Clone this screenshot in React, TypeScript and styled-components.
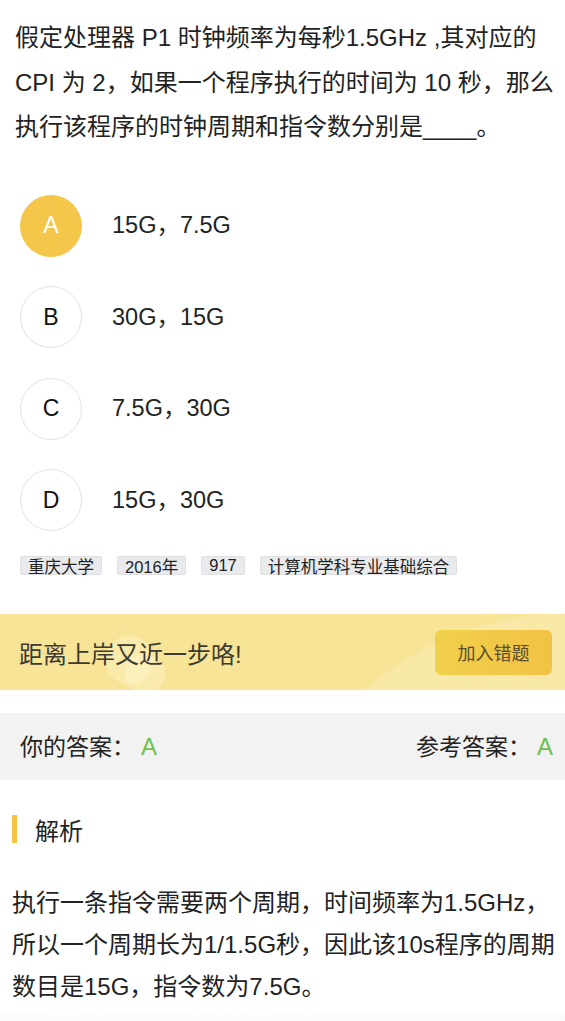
import { createGlobalStyle } from "styled-components";
import styled from "styled-components";

const GlobalStyle = createGlobalStyle`
  html, body {
    margin: 0;
    padding: 0;
    background: #fff;
  }
  body {
    font-family: "Liberation Sans", "Noto Sans CJK SC", sans-serif;
    color: #222;
  }
`;

const Page = styled.div`
  width: 565px;
  overflow: hidden;
`;

// question stem
const Question = styled.p`
  margin: 0;
  padding: 16px 10px 0 15px;
  font-size: 24px;
  line-height: 44.5px;
  color: #222;
`;

const Options = styled.ul`
  list-style: none;
  margin: 0;
  padding: 45px 0 0 20px;
  display: flex;
  flex-direction: column;
  gap: 29.5px;
`;

const Option = styled.li`
  display: flex;
  align-items: center;
  gap: 30px;
  height: 62px;
`;

const Circle = styled.span<{ $active?: boolean }>`
  box-sizing: border-box;
  width: 62px;
  height: 62px;
  border-radius: 50%;
  display: flex;
  align-items: center;
  justify-content: center;
  font-size: 23px;
  color: ${(p) => (p.$active ? "#fff" : "#111")};
  background: ${(p) => (p.$active ? "#f4c64a" : "#fff")};
  border: 1px solid ${(p) => (p.$active ? "#f4c64a" : "#e2e2e2")};
`;

const OptionText = styled.span`
  padding-bottom: 5px;
  font-size: 23.5px;
  color: #222;
`;

const Tags = styled.div`
  display: flex;
  gap: 15px;
  padding: 25px 0 0 20px;
`;

const Tag = styled.span`
  box-sizing: border-box;
  height: 19px;
  padding: 0 7px;
  display: flex;
  align-items: center;
  font-size: 16.5px;
  color: #222;
  background: #e9eaed;
  border: 1px solid #dfe0e3;
  border-radius: 2px;
`;

// encouragement banner
const Banner = styled.div`
  position: relative;
  margin-top: 39px;
  height: 76px;
  display: flex;
  align-items: center;
  justify-content: space-between;
  padding: 0 13px 0 19px;
  background: #f8e497;
  overflow: hidden;

  &::before {
    content: "";
    position: absolute;
    left: 265px;
    top: 0;
    width: 600px;
    height: 600px;
    border-radius: 50%;
    background: #f9e9a8;
  }
`;

const Bubble = styled.span<{ $x: number; $y: number; $size: number }>`
  position: absolute;
  left: ${(p) => p.$x}px;
  top: ${(p) => p.$y}px;
  width: ${(p) => p.$size}px;
  height: ${(p) => p.$size}px;
  border-radius: 50%;
  background: rgba(255, 248, 215, 0.35);
`;

const BannerText = styled.span`
  position: relative;
  font-size: 24px;
  color: #3d3a30;
`;

const AddButton = styled.button`
  position: relative;
  width: 117px;
  height: 45px;
  border: none;
  border-radius: 6px;
  background: linear-gradient(90deg, #f0d14b, #f3c143);
  font-family: "Liberation Sans", "Noto Sans CJK SC", sans-serif;
  font-size: 18px;
  color: #5a4d2c;
  cursor: pointer;
`;

const AnswerBar = styled.div`
  margin-top: 23px;
  height: 67px;
  display: flex;
  align-items: center;
  justify-content: space-between;
  padding: 0 12px 3px 20px;
  box-sizing: border-box;
  background: #f2f2f2;
  font-size: 23px;
  color: #222;
`;

const Letter = styled.span`
  margin-left: 6px;
  font-size: 24px;
  color: #6cc04a;
`;

const SectionTitle = styled.h3`
  margin: 35px 0 0 12px;
  display: flex;
  align-items: center;
  gap: 18px;
  height: 28px;
  font-size: 24px;
  font-weight: normal;
  color: #222;

  &::before {
    content: "";
    width: 5px;
    height: 28px;
    background: #f5c242;
  }
`;

const Analysis = styled.p`
  margin: 0;
  padding: 39px 10px 0 12px;
  font-size: 24px;
  line-height: 42px;
  color: #222;
`;

const BottomFade = styled.div`
  height: 20px;
  background: linear-gradient(180deg, #fff, #f7f7f7);
`;

const options = [
  { key: "A", text: "15G，7.5G", active: true },
  { key: "B", text: "30G，15G" },
  { key: "C", text: "7.5G，30G" },
  { key: "D", text: "15G，30G" },
];

const tags = ["重庆大学", "2016年", "917", "计算机学科专业基础综合"];

export default function App() {
  return (
    <Page>
      <GlobalStyle />
      <Question>
        假定处理器 P1 时钟频率为每秒1.5GHz ,其对应的 CPI 为 2，如果一个程序执行的时间为 10 秒，那么执行该程序的时钟周期和指令数分别是____。
      </Question>

      <Options>
        {options.map((o) => (
          <Option key={o.key}>
            <Circle $active={o.active}>{o.key}</Circle>
            <OptionText>{o.text}</OptionText>
          </Option>
        ))}
      </Options>

      <Tags>
        {tags.map((t) => (
          <Tag key={t}>{t}</Tag>
        ))}
      </Tags>

      <Banner>
        <Bubble $x={105} $y={22} $size={48} />
        <Bubble $x={125} $y={40} $size={40} />
        <BannerText>距离上岸又近一步咯!</BannerText>
        <AddButton>加入错题</AddButton>
      </Banner>

      <AnswerBar>
        <span>
          你的答案：<Letter>A</Letter>
        </span>
        <span>
          参考答案：<Letter>A</Letter>
        </span>
      </AnswerBar>

      <SectionTitle>解析</SectionTitle>

      <Analysis>
        执行一条指令需要两个周期，时间频率为1.5GHz，所以一个周期长为1/1.5G秒，因此该10s程序的周期数目是15G，指令数为7.5G。
      </Analysis>
      <BottomFade />
    </Page>
  );
}
